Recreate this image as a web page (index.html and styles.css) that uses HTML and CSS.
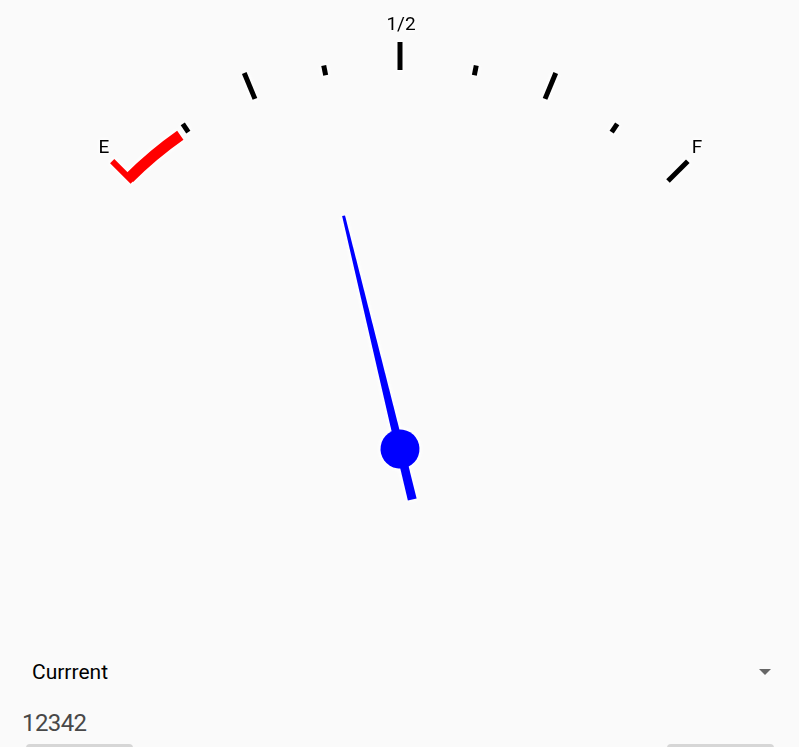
FILE: index.html
```html
<!DOCTYPE html>
<html lang="en">
<head>
  <meta charset="UTF-8">
  <meta name="viewport" content="width=device-width, initial-scale=1.0">
  <title>Fuel Gauge</title>
  <link rel="stylesheet" href="styles.css">
</head>
<body>

  <svg class="gauge" width="799" height="648" viewBox="0 0 799 648">
    <g transform="translate(400 449)">
      <!-- labels -->
      <text class="label" x="-296" y="-296">E</text>
      <text class="label" x="1" y="-419">1/2</text>
      <text class="label" x="297" y="-296">F</text>

      <!-- major ticks -->
      <line class="tick major red" x1="0" y1="-378" x2="0" y2="-407" transform="rotate(-45)"/>
      <line class="tick major" x1="0" y1="-379" x2="0" y2="-407" transform="rotate(-22.5)"/>
      <line class="tick major" x1="0" y1="-379" x2="0" y2="-407"/>
      <line class="tick major" x1="0" y1="-379" x2="0" y2="-407" transform="rotate(22.5)"/>
      <line class="tick major" x1="0" y1="-379" x2="0" y2="-407" transform="rotate(45)"/>

      <!-- minor ticks -->
      <line class="tick" x1="0" y1="-381" x2="0" y2="-391" transform="rotate(-33.75)"/>
      <line class="tick" x1="0" y1="-381" x2="0" y2="-391" transform="rotate(-11.25)"/>
      <line class="tick" x1="0" y1="-381" x2="0" y2="-391" transform="rotate(11.25)"/>
      <line class="tick" x1="0" y1="-381" x2="0" y2="-391" transform="rotate(33.75)"/>

      <!-- reserve zone -->
      <path class="reserve" d="M -270.8 -270.8 A 383 383 0 0 1 -219.7 -313.7"/>

      <!-- needle -->
      <g transform="rotate(-13.6)">
        <polygon class="needle" points="-1.5,-240 1.5,-240 4.2,0 4.5,52 -4.5,52 -4.2,0"/>
        <circle class="needle" cx="0" cy="0" r="19.5"/>
      </g>
    </g>
  </svg>

  <div class="spinner">
    <span>Currrent</span>
    <span class="arrow"></span>
  </div>

  <div class="value">12342</div>

  <div class="buttons">
    <button></button>
    <button></button>
  </div>

</body>
</html>
```

FILE: styles.css
```css
body {
  margin: 0;
  background-color: #fafafa;
  font-family: Roboto, "Noto Sans", sans-serif;
  overflow: hidden;
}
.gauge {
  display: block;
  filter: drop-shadow(0 0 2px #fff) drop-shadow(0 0 2px #fff);
}
.label {
  font-family: Roboto, sans-serif;
  font-size: 19px;
  text-anchor: middle;
  fill: #000;
}
.tick {
  stroke: #000;
  stroke-width: 5;
}
.tick.red {
  stroke: #ff0000;
  stroke-width: 6;
}
.reserve {
  fill: none;
  stroke: #ff0000;
  stroke-width: 11;
}
.needle {
  fill: #0000ff;
}
.spinner {
  display: flex;
  justify-content: space-between;
  align-items: center;
  height: 48px;
  padding: 0 28px 0 32px;
  font-size: 21px;
  color: #000;
}
.arrow {
  width: 0;
  height: 0;
  border-left: 6px solid transparent;
  border-right: 6px solid transparent;
  border-top: 6px solid #666;
}
.value {
  height: 48px;
  line-height: 48px;
  padding: 3px 0 0 22px;
  box-sizing: border-box;
  font-size: 24px;
  letter-spacing: -0.6px;
  color: #484848;
}
.buttons {
  display: flex;
  justify-content: space-between;
  padding: 0 25px 0 26px;
}
button {
  width: 107px;
  height: 40px;
  border: none;
  border-radius: 4px;
  background-color: #d6d6d6;
}
```
